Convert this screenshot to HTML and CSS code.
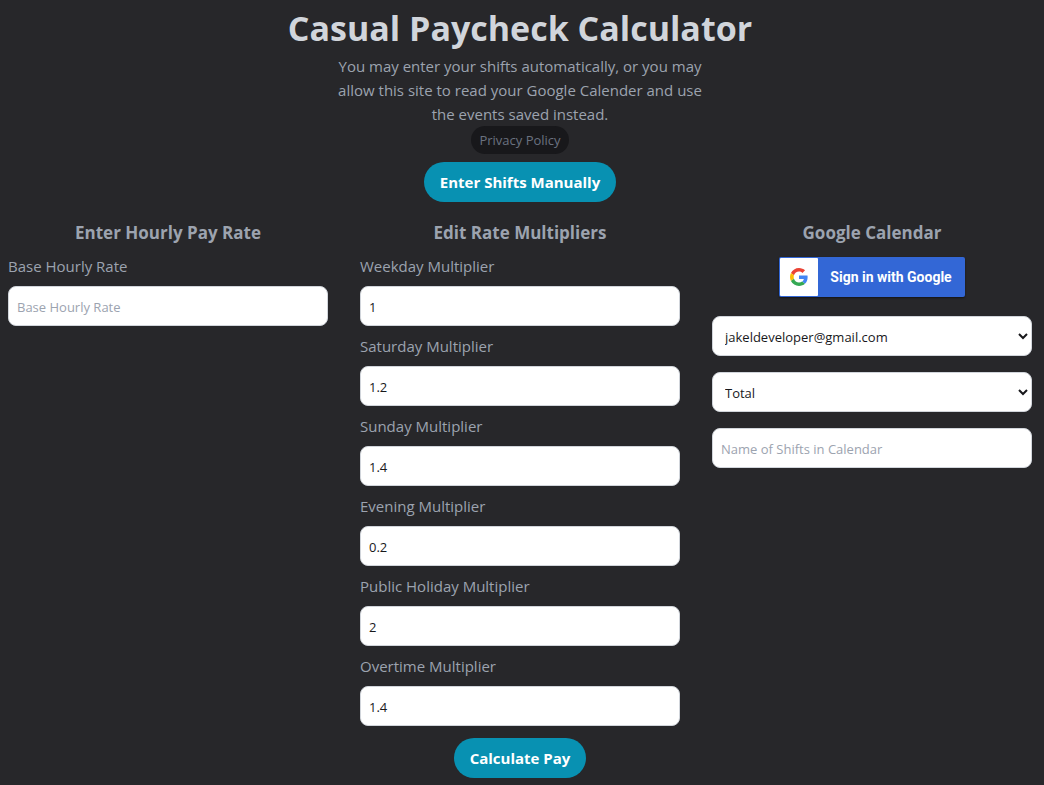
FILE: index.html
```html
<!DOCTYPE html>
<html lang="en">
<head>
<meta charset="utf-8">
<meta name="viewport" content="width=device-width, initial-scale=1">
<title>Casual Paycheck Calculator</title>
<link rel="stylesheet" href="styles.css">
</head>
<body>
<header class="intro">
  <h1 class="title">Casual Paycheck Calculator</h1>
  <p class="lead">You may enter your shifts automatically, or you may allow this site to read your Google Calender and use the events saved instead.</p>
  <a class="privacy" href="#privacy">Privacy Policy</a>
  <button class="pill" type="button">Enter Shifts Manually</button>
</header>
<form class="calculator">
  <div class="columns">
    <section class="column">
      <h2 class="heading">Enter Hourly Pay Rate</h2>
      <div class="field"><label class="label" for="base">Base Hourly Rate</label><input class="control" id="base" type="text" placeholder="Base Hourly Rate"></div>
    </section>
    <section class="column">
      <h2 class="heading">Edit Rate Multipliers</h2>
      <div class="field"><label class="label" for="weekday">Weekday Multiplier</label><input class="control" id="weekday" type="text" value="1"></div>
      <div class="field"><label class="label" for="saturday">Saturday Multiplier</label><input class="control" id="saturday" type="text" value="1.2"></div>
      <div class="field"><label class="label" for="sunday">Sunday Multiplier</label><input class="control" id="sunday" type="text" value="1.4"></div>
      <div class="field"><label class="label" for="evening">Evening Multiplier</label><input class="control" id="evening" type="text" value="0.2"></div>
      <div class="field"><label class="label" for="holiday">Public Holiday Multiplier</label><input class="control" id="holiday" type="text" value="2"></div>
      <div class="field"><label class="label" for="overtime">Overtime Multiplier</label><input class="control" id="overtime" type="text" value="1.4"></div>
    </section>
    <section class="column">
      <h2 class="heading">Google Calendar</h2>
      <button class="google" type="button">
        <span class="google-mark">
          <svg width="18" height="18" viewBox="0 0 48 48" aria-hidden="true">
            <path fill="#EA4335" d="M24 9.5c3.54 0 6.71 1.22 9.21 3.6l6.85-6.85C35.9 2.38 30.47 0 24 0 14.62 0 6.51 5.38 2.56 13.22l7.98 6.19C12.43 13.72 17.74 9.5 24 9.5z"/>
            <path fill="#4285F4" d="M46.98 24.55c0-1.57-.15-3.09-.38-4.55H24v9.02h12.94c-.58 2.96-2.26 5.48-4.78 7.18l7.73 6c4.51-4.18 7.09-10.36 7.09-17.65z"/>
            <path fill="#FBBC05" d="M10.53 28.59c-.48-1.45-.76-2.99-.76-4.59s.27-3.14.76-4.59l-7.98-6.19C.92 16.46 0 20.12 0 24c0 3.88.92 7.54 2.56 10.78l7.97-6.19z"/>
            <path fill="#34A853" d="M24 48c6.48 0 11.93-2.13 15.89-5.81l-7.73-6c-2.15 1.45-4.92 2.3-8.16 2.3-6.26 0-11.57-4.22-13.47-9.91l-7.98 6.19C6.51 42.62 14.62 48 24 48z"/>
          </svg>
        </span>
        <span class="google-text">Sign in with Google</span>
      </button>
      <div class="calendar-fields">
        <select class="control select" aria-label="Calendar"><option>jakeldeveloper@gmail.com</option></select>
        <select class="control select" aria-label="Pay period"><option>Total</option></select>
        <input class="control" type="text" aria-label="Name of Shifts in Calendar" placeholder="Name of Shifts in Calendar">
      </div>
    </section>
  </div>
  <button class="pill" type="submit">Calculate Pay</button>
</form>
</body>
</html>
```
FILE: styles.css
```css
* { box-sizing: border-box; }
body {
  margin: 0;
  padding: 4px 12px 6px 8px;
  background: #27272a;
  color: #9ca3af;
  font-family: "Open Sans", "Noto Sans", sans-serif;
  font-size: 15px;
  line-height: 24px;
}
h1, h2, p { margin: 0; }
button, input, select { font-family: inherit; }
.intro, .calculator { display: flex; flex-direction: column; align-items: center; }
.title { color: #d1d5db; font-size: 34px; line-height: 48px; font-weight: 700; text-align: center; padding-bottom: 2px; }
.lead { max-width: 384px; text-align: center; }
.privacy {
  padding: 4px 8px;
  border-radius: 14px;
  background: #18181b;
  color: #6b7280;
  font-size: 13px;
  line-height: 20px;
  text-decoration: none;
}
.pill {
  margin-top: 8px;
  padding: 8px 16px;
  border: 0;
  border-radius: 20px;
  background: #0891b2;
  color: #fff;
  font-size: 15px;
  line-height: 24px;
  font-weight: 700;
}
.calculator { margin-top: 16px; }
.columns {
  display: grid;
  grid-template-columns: repeat(auto-fit, minmax(280px, 1fr));
  gap: 32px;
  width: 100%;
}
.column { display: flex; flex-direction: column; }
.heading { margin-bottom: 6px; font-size: 17px; line-height: 30px; font-weight: 700; text-align: center; }
.field { display: flex; flex-direction: column; gap: 8px; padding-bottom: 8px; }
.field:last-child { padding-bottom: 4px; }
.control {
  width: 100%;
  height: 40px;
  padding: 2px 8px 0;
  border: 1px solid #d1d5db;
  border-radius: 8px;
  background-color: #fff;
  color: #18181b;
  font-size: 13px;
}
.control::placeholder { color: #9ca3af; opacity: 1; }
.select { padding: 2px 4px 0 8px; }
.google {
  display: flex;
  align-self: center;
  align-items: center;
  margin-top: 3px;
  padding: 1px;
  border: 0;
  border-radius: 2px;
  background: #3367d6;
  box-shadow: 0 1px 2px #00000080;
  color: #fff;
  font-family: Roboto, sans-serif;
  font-size: 14px;
  font-weight: 700;
}
.google-mark { display: grid; place-items: center; width: 38px; height: 38px; border-radius: 1px; background: #fff; }
.google-text { padding: 0 12px; }
.calendar-fields { display: grid; gap: 16px; margin-top: 19px; }
```
